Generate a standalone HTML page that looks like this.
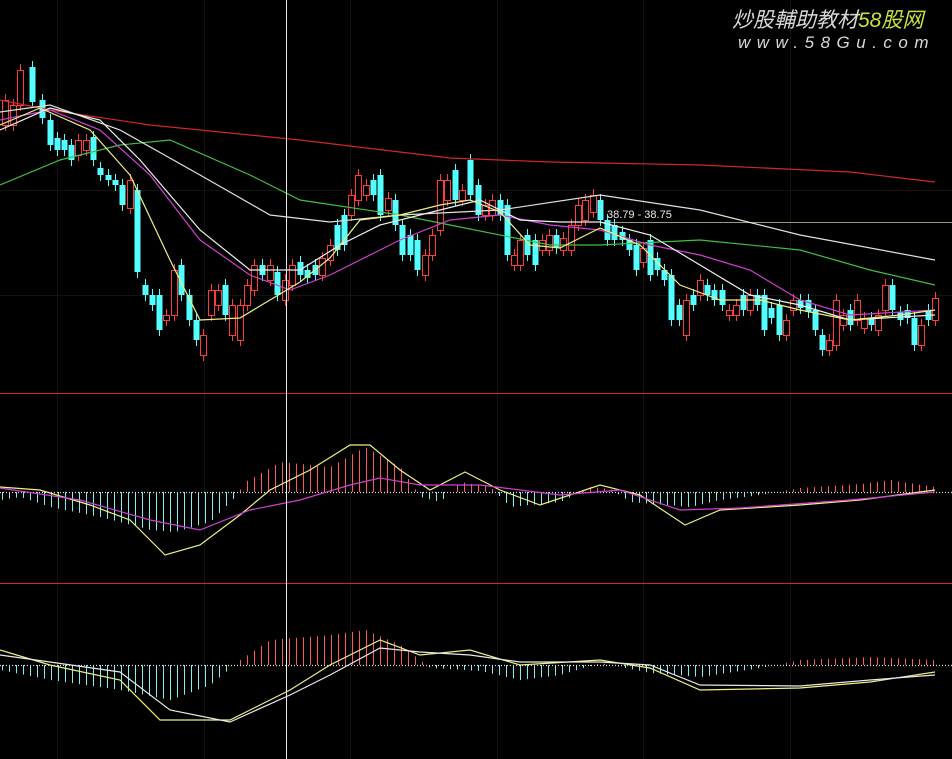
<!DOCTYPE html>
<html><head><meta charset="utf-8"><style>
html,body{margin:0;padding:0;background:#000;width:952px;height:759px;overflow:hidden}
svg{display:block}
.wm{position:absolute;left:732px;top:4px;font:italic 21px "Liberation Sans","Noto Sans CJK SC",sans-serif;color:#d8d8d8;white-space:nowrap;letter-spacing:0px}
.wm b{font-weight:normal;color:#c8e040}
.wm2{position:absolute;left:738px;top:33px;font:italic 17px "Liberation Sans",sans-serif;color:#d8d8d8;letter-spacing:6.5px;white-space:nowrap}
</style></head><body>
<svg id="s" width="952" height="759" xmlns="http://www.w3.org/2000/svg">
<g stroke="#121212" stroke-width="1">
<line x1="57.5" y1="0" x2="57.5" y2="759"/><line x1="204.5" y1="0" x2="204.5" y2="759"/>
<line x1="350.5" y1="0" x2="350.5" y2="759"/><line x1="497.5" y1="0" x2="497.5" y2="759"/>
<line x1="643.5" y1="0" x2="643.5" y2="759"/><line x1="790.5" y1="0" x2="790.5" y2="759"/>
<line x1="0" y1="190.5" x2="952" y2="190.5"/><line x1="0" y1="295.5" x2="952" y2="295.5"/>
</g>
<rect x="0" y="393" width="952" height="1" fill="#d02828"/>
<rect x="0" y="583" width="952" height="1" fill="#d02828"/>
<line x1="600" y1="222.5" x2="952" y2="222.5" stroke="#8aa080"/>
<g id="hist"></g>
<g id="cand"></g>
<g fill="none" stroke-width="1.2">
<polyline stroke="#d02828" points="0,100 50,110 150,125 300,140 450,158 550,162 700,165 850,172 935,182"/>
<polyline stroke="#40c040" points="0,185 60,160 120,145 170,140 250,175 300,200 400,215 450,225 550,245 600,245 700,240 800,250 870,270 935,285"/>
<polyline stroke="#e0e0e0" points="0,112 50,105 120,130 200,175 270,215 330,222 400,215 500,210 600,195 700,210 800,235 935,260"/>
<polyline stroke="#d040d0" points="0,120 50,110 100,130 150,175 200,240 250,275 290,290 330,275 400,240 450,220 500,215 550,225 600,230 650,245 700,255 750,270 800,300 850,315 935,310"/>
<polyline stroke="#f0f0f0" points="0,130 50,108 100,120 140,160 200,230 250,270 300,270 340,245 380,225 420,215 480,200 520,220 560,222 600,222 650,235 700,265 750,295 800,305 850,320 935,315"/>
<polyline stroke="#f0f080" points="0,125 40,108 90,130 130,175 170,260 200,320 240,318 270,300 300,282 330,258 360,220 400,215 440,205 470,200 500,212 530,245 560,248 600,228 640,245 680,285 720,300 760,300 800,310 850,320 900,315 935,310"/>
<line x1="0" y1="492.5" x2="952" y2="492.5" stroke="#ddd" stroke-dasharray="1,2"/>
<line x1="0" y1="665.5" x2="952" y2="665.5" stroke="#ddd" stroke-dasharray="1,2"/>
<polyline stroke="#f0f080" points="0,487 40,490 90,505 130,520 165,555 200,545 240,515 270,490 310,470 350,445 370,445 400,470 430,490 465,472 500,490 540,505 600,485 640,495 685,525 720,510 800,505 860,500 935,490"/>
<polyline stroke="#d040d0" points="0,488 80,500 150,520 200,530 250,510 300,500 350,485 380,478 420,485 480,485 560,495 620,490 680,510 740,508 850,500 935,492"/>
<polyline stroke="#f0f080" points="0,650 50,665 120,680 160,720 230,720 290,690 330,665 380,640 420,655 470,650 520,665 600,660 650,668 700,690 800,688 870,682 935,672"/>
<polyline stroke="#e8e8e8" points="0,655 50,662 120,672 170,710 230,722 290,695 330,675 380,648 420,652 470,655 520,662 600,662 650,665 700,685 800,686 870,680 935,675"/>
</g>
<line x1="286.5" y1="0" x2="286.5" y2="759" stroke="#e8e8e8"/>
<text x="607" y="218" fill="#e8e8e8" font-family="Liberation Sans,sans-serif" font-size="11">38.79 - 38.75</text>
</svg>
<div class="wm">炒股輔助教材<b>58股网</b></div>
<div class="wm2">www.58Gu.com</div>
<script>
var NS="http://www.w3.org/2000/svg";
function el(p,t,a){var e=document.createElementNS(NS,t);for(var k in a)e.setAttribute(k,a[k]);p.appendChild(e);}
var C=[[5,'r',100,125],[13,'r',105,125],[20,'r',70,105],[32,'c',67,102],[42,'c',100,118],[50,'c',120,145],[57,'c',138,150],[64,'c',140,150],[71,'c',145,160],[78,'r',140,155],[86,'r',140,150],[93,'c',137,160],[100,'c',168,175],[108,'c',175,180],[115,'c',180,185],[122,'c',185,205],[130,'r',180,208],[137,'c',190,272],[145,'c',285,295],[152,'c',295,305],[159,'c',295,330],[166,'r',315,320],[174,'r',270,315],[181,'c',265,295],[189,'c',295,320],[196,'c',320,340],[203,'r',335,355],[211,'r',290,315],[218,'r',290,305],[225,'c',285,315],[232,'r',305,335],[240,'r',305,340],[247,'r',285,305],[254,'r',265,290],[262,'c',265,275],[270,'r',265,280],[277,'c',272,295],[285,'r',280,300],[292,'r',265,285],[300,'c',262,275],[307,'c',270,278],[315,'c',265,275],[322,'r',258,275],[330,'r',245,260],[337,'c',225,250],[344,'c',215,245],[351,'r',195,215],[358,'r',175,200],[366,'r',185,195],[373,'c',180,195],[380,'c',175,215],[388,'r',198,210],[395,'c',200,225],[402,'c',225,255],[410,'c',235,255],[417,'c',240,270],[425,'r',255,275],[432,'r',235,255],[440,'r',180,230],[447,'r',180,200],[455,'c',170,200],[462,'r',190,200],[470,'c',160,195],[478,'c',185,215],[485,'r',205,215],[492,'r',200,215],[500,'c',200,215],[507,'c',205,255],[514,'r',255,265],[520,'r',240,265],[527,'c',235,255],[535,'c',240,265],[542,'r',240,250],[549,'r',235,250],[556,'c',235,248],[563,'r',238,250],[571,'r',225,250],[578,'r',205,225],[585,'r',200,220],[593,'r',195,212],[600,'c',200,220],[607,'c',220,240],[614,'c',225,240],[622,'c',232,240],[629,'c',240,250],[636,'c',245,270],[643,'r',248,262],[650,'c',240,275],[657,'c',258,270],[664,'c',270,280],[671,'c',275,320],[679,'c',305,320],[686,'r',300,335],[693,'c',295,305],[700,'r',280,295],[707,'c',285,295],[714,'c',290,300],[722,'c',290,305],[729,'r',310,315],[736,'r',305,315],[743,'c',295,310],[750,'r',295,310],[757,'c',295,305],[764,'c',295,330],[771,'c',308,318],[779,'c',305,335],[786,'r',320,335],[793,'r',300,310],[800,'c',300,308],[808,'c',300,312],[815,'c',310,330],[822,'c',335,350],[829,'r',340,350],[836,'r',300,345],[843,'r',315,325],[850,'c',310,325],[857,'r',300,320],[864,'r',318,328],[871,'c',318,325],[878,'r',315,330],[885,'r',285,310],[892,'c',285,310],[900,'c',312,320],[907,'c',310,318],[914,'c',318,345],[921,'r',325,345],[928,'c',310,320],[935,'r',298,320]];
var g=document.getElementById('cand');
C.forEach(function(c){var x=c[0],col=c[1]=='r'?'#ff3c3c':'#54ffff',t=c[2],b=c[3];
el(g,'line',{x1:x+.5,x2:x+.5,y1:t-6,y2:b+6,stroke:col});
if(c[1]=='r')el(g,'rect',{x:x-2.5,y:t+.5,width:6,height:Math.max(b-t,1),fill:'#000',stroke:col});
else el(g,'rect',{x:x-2.5,y:t,width:6,height:Math.max(b-t,1),fill:col});});
function interp(P,x){for(var i=1;i<P.length;i++){if(x<=P[i][0]){var a=P[i-1],b=P[i];return a[1]+(b[1]-a[1])*(x-a[0])/(b[0]-a[0]);}}return P[P.length-1][1];}
var H1=[[0,-8],[20,-5],[50,-15],[100,-25],[150,-38],[175,-40],[210,-30],[235,-5],[245,10],[280,30],[330,25],[365,45],[400,25],[420,-5],[440,-10],[460,10],[490,5],[510,-15],[560,-10],[590,5],[610,3],[630,-10],[690,-15],[720,-8],[760,-3],[800,4],[860,8],[890,12],[935,5]];
var H2=[[0,-5],[50,-15],[120,-25],[170,-35],[210,-20],[240,5],[270,25],[330,30],[365,35],[400,20],[430,-3],[480,-6],[520,-15],[560,-10],[600,2],[650,-8],[700,-12],[760,-3],[800,5],[870,8],[935,5]];
var h=document.getElementById('hist');
function hist(P,z){for(var x=2;x<940;x+=7){var v=interp(P,x);if(Math.abs(v)<1)continue;el(h,'line',{x1:x+.5,x2:x+.5,y1:z,y2:z-v,stroke:v>0?'#ff5a5a':'#7ff0f0'});}}
hist(H1,492);hist(H2,665);
</script>
</body></html>
